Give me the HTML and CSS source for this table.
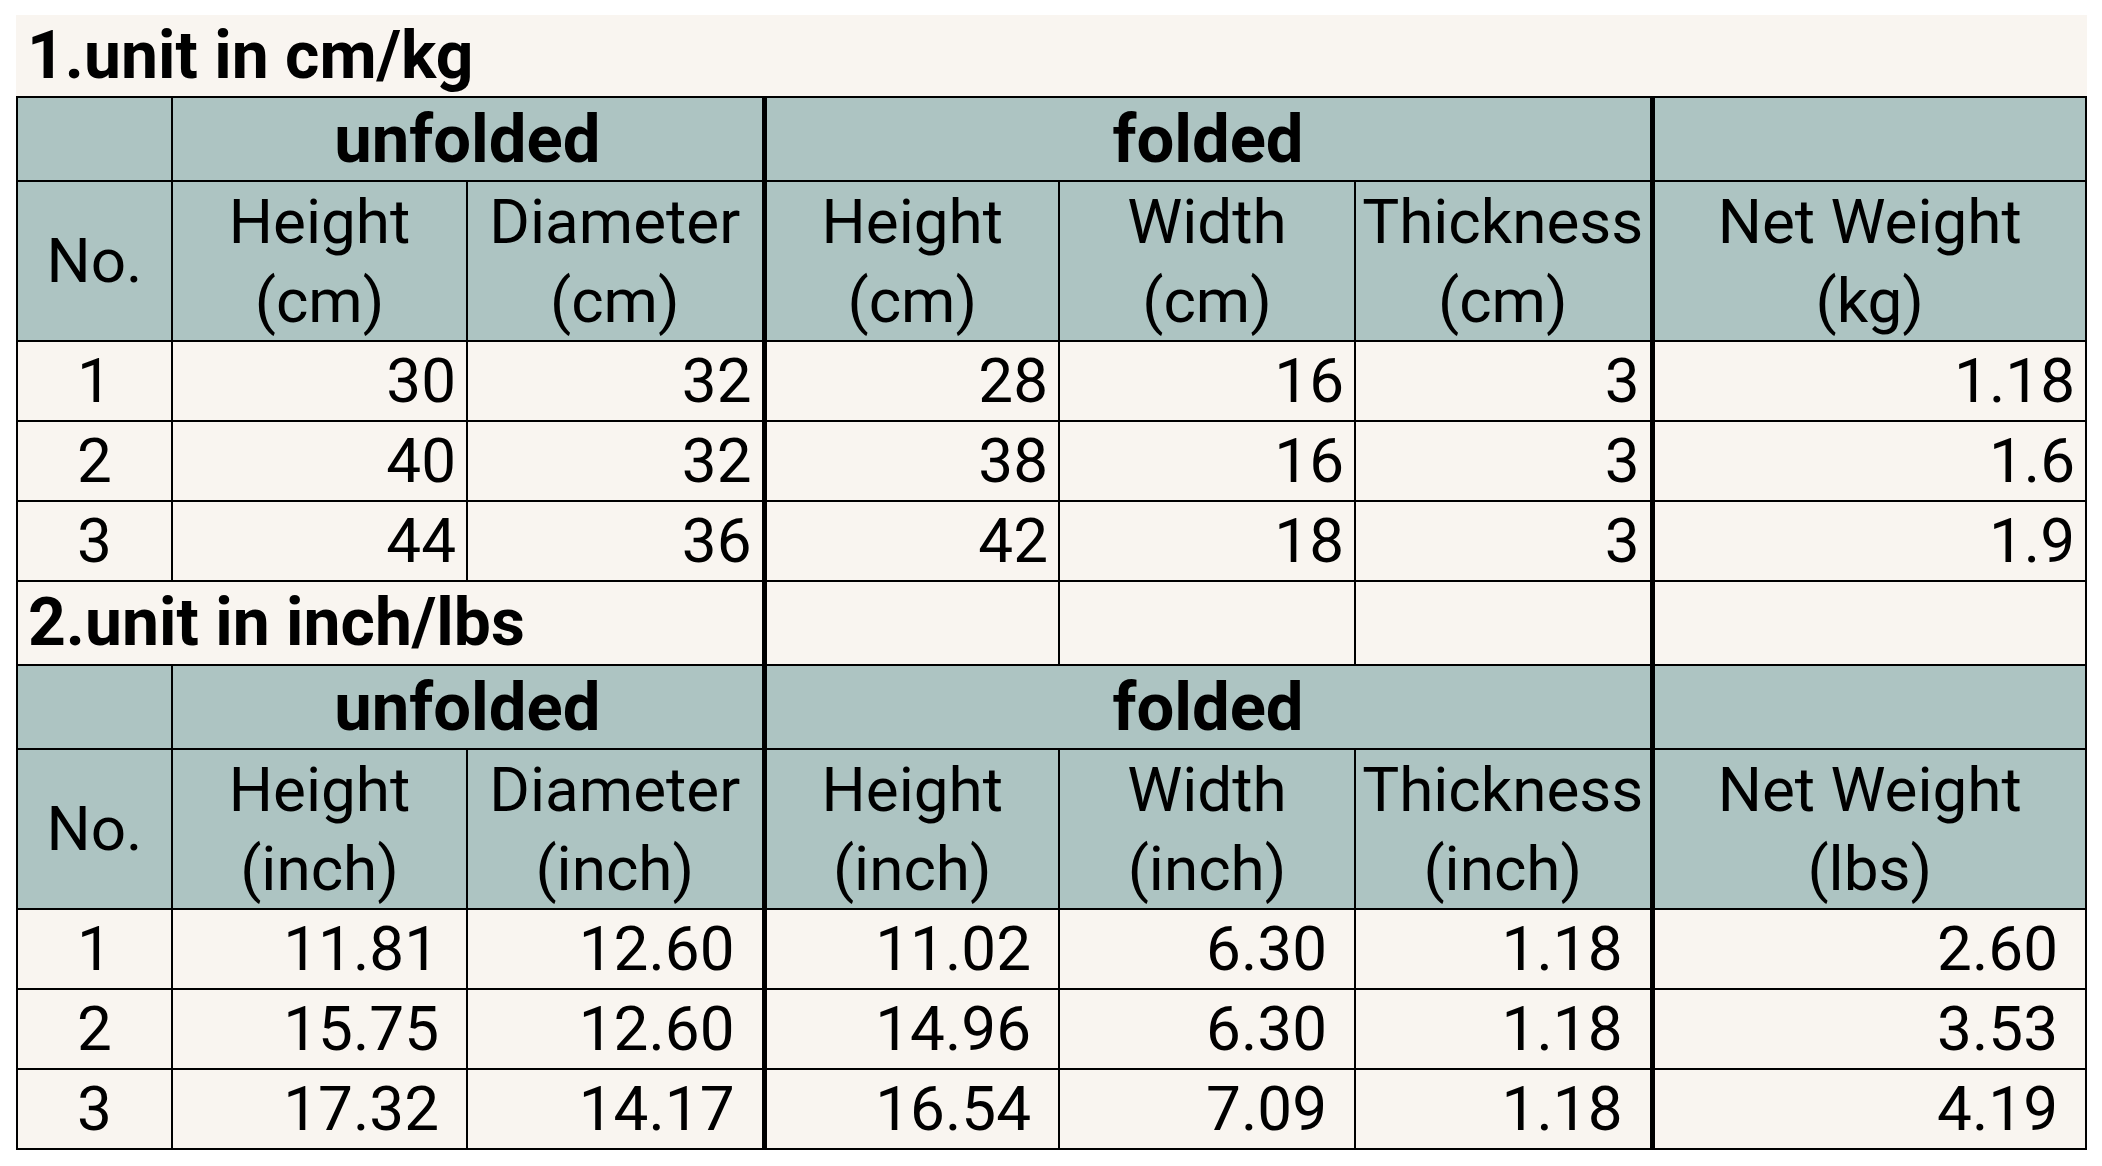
FILE: index.html
```html
<!DOCTYPE html>
<html lang="en">
<head>
<meta charset="utf-8">
<title>Size chart</title>
<link rel="stylesheet" href="styles.css">
</head>
<body>
<table class="sheet">
  <colgroup>
    <col class="c-no"><col class="c-a"><col class="c-b"><col class="c-c"><col class="c-d"><col class="c-e"><col class="c-f">
  </colgroup>
  <tbody>
    <tr class="r-title">
      <td class="title plain" colspan="7">1.unit in cm/kg</td>
    </tr>
    <tr class="r-group">
      <td class="hd"></td>
      <td class="hd grp" colspan="2">unfolded</td>
      <td class="hd grp thick" colspan="3">folded</td>
      <td class="hd thick"></td>
    </tr>
    <tr class="r-head">
      <td class="hd">No.</td>
      <td class="hd two">Height<br>(cm)</td>
      <td class="hd two">Diameter<br>(cm)</td>
      <td class="hd two thick">Height<br>(cm)</td>
      <td class="hd two">Width<br>(cm)</td>
      <td class="hd two">Thickness<br>(cm)</td>
      <td class="hd two thick">Net Weight<br>(kg)</td>
    </tr>
    <tr class="r-data">
      <td class="no">1</td><td class="num">30</td><td class="num">32</td><td class="num thick">28</td><td class="num">16</td><td class="num">3</td><td class="num thick">1.18</td>
    </tr>
    <tr class="r-data">
      <td class="no">2</td><td class="num">40</td><td class="num">32</td><td class="num thick">38</td><td class="num">16</td><td class="num">3</td><td class="num thick">1.6</td>
    </tr>
    <tr class="r-data">
      <td class="no">3</td><td class="num">44</td><td class="num">36</td><td class="num thick">42</td><td class="num">18</td><td class="num">3</td><td class="num thick">1.9</td>
    </tr>
    <tr class="r-title2">
      <td class="title" colspan="3">2.unit in inch/lbs</td>
      <td class="thick"></td><td></td><td></td><td class="thick"></td>
    </tr>
    <tr class="r-group">
      <td class="hd"></td>
      <td class="hd grp" colspan="2">unfolded</td>
      <td class="hd grp thick" colspan="3">folded</td>
      <td class="hd thick"></td>
    </tr>
    <tr class="r-head">
      <td class="hd">No.</td>
      <td class="hd two">Height<br>(inch)</td>
      <td class="hd two">Diameter<br>(inch)</td>
      <td class="hd two thick">Height<br>(inch)</td>
      <td class="hd two">Width<br>(inch)</td>
      <td class="hd two">Thickness<br>(inch)</td>
      <td class="hd two thick">Net Weight<br>(lbs)</td>
    </tr>
    <tr class="r-data">
      <td class="no">1</td><td class="num wide">11.81</td><td class="num wide">12.60</td><td class="num wide thick">11.02</td><td class="num wide">6.30</td><td class="num wide">1.18</td><td class="num wide thick">2.60</td>
    </tr>
    <tr class="r-data">
      <td class="no">2</td><td class="num wide">15.75</td><td class="num wide">12.60</td><td class="num wide thick">14.96</td><td class="num wide">6.30</td><td class="num wide">1.18</td><td class="num wide thick">3.53</td>
    </tr>
    <tr class="r-data">
      <td class="no">3</td><td class="num wide">17.32</td><td class="num wide">14.17</td><td class="num wide thick">16.54</td><td class="num wide">7.09</td><td class="num wide">1.18</td><td class="num wide thick">4.19</td>
    </tr>
  </tbody>
</table>
</body>
</html>
```

FILE: styles.css
```css
html, body {
  margin: 0;
  padding: 0;
  background: #ffffff;
}

body {
  padding: 15px 0 0 16px;
  font-family: Roboto, "Liberation Sans", sans-serif;
  color: #000000;
}

.sheet {
  border-collapse: collapse;
  table-layout: fixed;
  background: #f9f5f0;
  font-size: 62px;
}

.c-no { width: 155px; }
.c-a { width: 295px; }
.c-b { width: 297px; }
.c-c { width: 295px; }
.c-d { width: 296px; }
.c-e { width: 297px; }
.c-f { width: 434px; }

.sheet td {
  border: 2px solid #000000;
  padding: 0;
  line-height: 70px;
  vertical-align: middle;
  white-space: nowrap;
  overflow: hidden;
}

.sheet td.plain {
  border: none;
}

.sheet td.thick {
  border-left: 5px solid #000000;
}

.sheet td.two {
  line-height: 79px;
}

.r-title { height: 82px; }
.r-group { height: 84px; }
.r-head { height: 160px; }
.r-data { height: 80px; }
.r-title2 { height: 84px; }

.title {
  font-size: 66px;
  font-weight: 700;
  text-align: left;
  padding-left: 10px !important;
}

.hd {
  background: #adc4c2;
  text-align: center;
}

.grp {
  font-size: 67px;
  font-weight: 700;
}

.no {
  text-align: center;
}

.num {
  text-align: right;
  padding-right: 10px !important;
}

.num.wide {
  padding-right: 27px !important;
}
```
